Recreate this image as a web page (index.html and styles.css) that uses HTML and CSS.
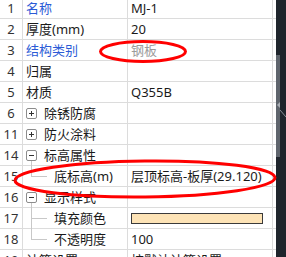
FILE: index.html
```html
<!DOCTYPE html>
<html lang="zh-CN">
<head>
    <meta charset="UTF-8">
    <title>属性</title>
    <link rel="stylesheet" href="styles.css">
</head>
<body>
    <div class="page">
        <div class="props">
            <div class="row"><div class="no">1</div><div class="key blue">名称</div><div class="val">MJ-1</div></div>
            <div class="row"><div class="no">2</div><div class="key">厚度(mm)</div><div class="val">20</div></div>
            <div class="row"><div class="no">3</div><div class="key blue">结构类别</div><div class="val muted">钢板</div></div>
            <div class="row"><div class="no">4</div><div class="key">归属</div><div class="val"></div></div>
            <div class="row"><div class="no">5</div><div class="key">材质</div><div class="val">Q355B</div></div>
            <div class="row"><div class="no">6</div><div class="key"><span class="toggle"><svg viewBox="0 0 11 11"><rect x=".5" y=".5" width="10" height="10" rx="1.5" fill="#fff" stroke="#8c8c8c"/><path d="M3 5.5h5M5.5 3v5" stroke="#333"/></svg></span>除锈防腐</div><div class="val"></div></div>
            <div class="row"><div class="no">11</div><div class="key"><span class="toggle"><svg viewBox="0 0 11 11"><rect x=".5" y=".5" width="10" height="10" rx="1.5" fill="#fff" stroke="#8c8c8c"/><path d="M3 5.5h5M5.5 3v5" stroke="#333"/></svg></span>防火涂料</div><div class="val"></div></div>
            <div class="row"><div class="no">14</div><div class="key"><span class="toggle open"><svg viewBox="0 0 11 11"><rect x=".5" y=".5" width="10" height="10" rx="1.5" fill="#fff" stroke="#8c8c8c"/><path d="M3 5.5h5" stroke="#333"/></svg></span>标高属性</div><div class="val"></div></div>
            <div class="row"><div class="no">15</div><div class="key"><span class="branch last"></span>底标高(m)</div><div class="val">层顶标高-板厚(29.120)</div></div>
            <div class="row"><div class="no">16</div><div class="key"><span class="toggle open"><svg viewBox="0 0 11 11"><rect x=".5" y=".5" width="10" height="10" rx="1.5" fill="#fff" stroke="#8c8c8c"/><path d="M3 5.5h5" stroke="#333"/></svg></span>显示样式</div><div class="val"></div></div>
            <div class="row"><div class="no">17</div><div class="key"><span class="branch"></span>填充颜色</div><div class="val"><span class="swatch"></span></div></div>
            <div class="row"><div class="no">18</div><div class="key"><span class="branch last"></span>不透明度</div><div class="val">100</div></div>
            <div class="row"><div class="no">19</div><div class="key">计算设置</div><div class="val">按默认计算设置</div></div>
        </div>
        <div class="side">
            <svg width="10" height="257" viewBox="0 0 10 257">
                <rect x="0" y="55" width="4" height="102" fill="#5e646c"/>
                <path d="M4 102v6l-3-3z" fill="#a9aeb5"/>
                <path d="M4 110l6 7" stroke="#8a9098" stroke-width="1"/>
            </svg>
        </div>
        <svg class="marks" width="286" height="257" viewBox="0 0 286 257">
            <ellipse cx="143" cy="51.5" rx="42.5" ry="10" fill="none" stroke="#f00" stroke-width="3"/>
            <ellipse cx="145" cy="179" rx="130" ry="18" transform="rotate(-0.6 145 179)" fill="none" stroke="#f00" stroke-width="3"/>
        </svg>
    </div>
</body>
</html>
```

FILE: styles.css
```css
* { margin: 0; padding: 0; box-sizing: border-box; }
body {
    font-family: "Noto Sans", "Noto Sans CJK SC", sans-serif;
    font-size: 13px;
    color: #1a1a1a;
    background: #fff;
    width: 286px;
    height: 257px;
    overflow: hidden;
}
.page { display: flex; height: 257px; position: relative; overflow: hidden; }
.props { width: 276px; flex: none; margin-top: -2px; }
.row {
    display: grid;
    grid-template-columns: 23px 105px 145px;
    height: 21px;
    border-bottom: 1px solid #dcdcdc;
}
.row > div {
    display: flex;
    align-items: center;
    line-height: 20px;
    padding: 0 3px;
    border-right: 1px solid #dcdcdc;
    white-space: nowrap;
    overflow: hidden;
}
.row > .no { justify-content: center; padding: 0; color: #333; }
.row > .key { overflow: visible; }
.blue { color: #2b5bd6; }
.muted { color: #9a9a9a; }
.toggle { position: relative; width: 11px; height: 11px; margin-right: 7px; flex: none; }
.toggle svg { display: block; width: 11px; height: 11px; }
.toggle.open::after {
    content: "";
    position: absolute;
    left: 5px;
    top: 11px;
    width: 1px;
    height: 6px;
    background: #c8c8c8;
}
.branch { position: relative; align-self: stretch; width: 28px; flex: none; }
.branch::before {
    content: "";
    position: absolute;
    left: 5px;
    top: -1px;
    bottom: -1px;
    width: 1px;
    background: #c8c8c8;
}
.branch.last::before { bottom: 50%; }
.branch::after {
    content: "";
    position: absolute;
    left: 5px;
    top: 50%;
    width: 16px;
    height: 1px;
    background: #c8c8c8;
}
.swatch {
    display: block;
    width: 132px;
    height: 11px;
    background: #fde3b6;
    border: 1px solid #3a3a3a;
}
.side { width: 10px; flex: none; background: #1f252c; }
.side svg { display: block; }
.marks { position: absolute; left: 0; top: 0; pointer-events: none; }
```
